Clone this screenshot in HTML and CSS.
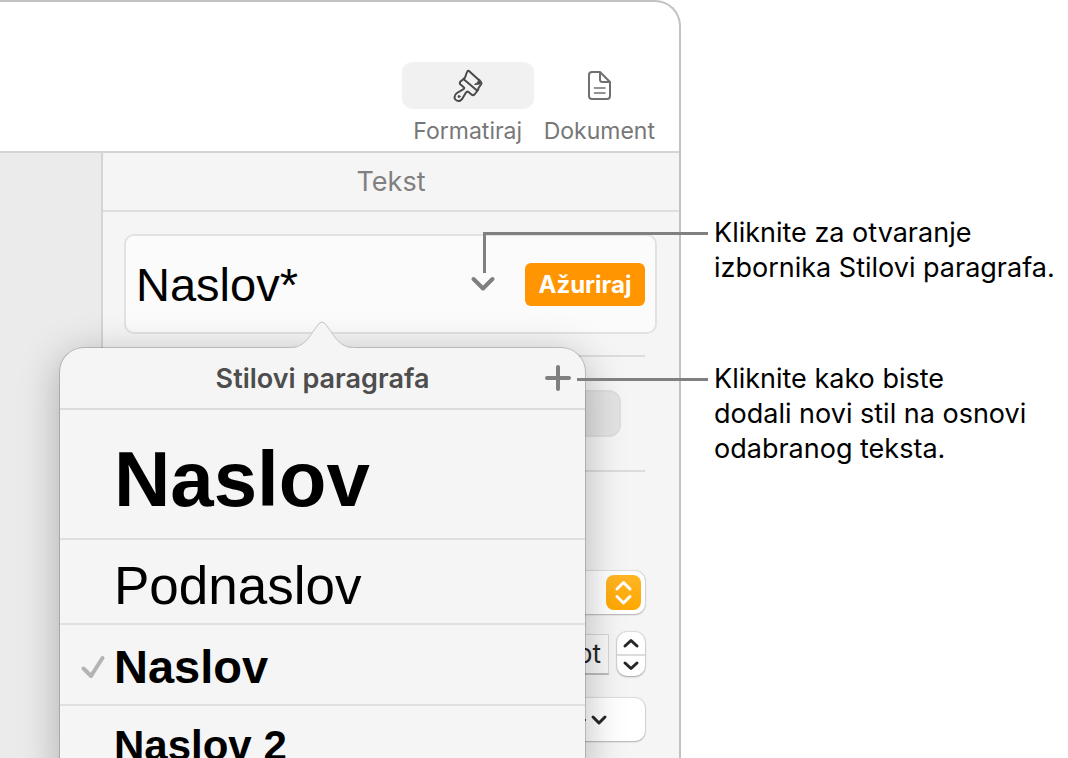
FILE: index.html
```html
<!DOCTYPE html>
<html lang="hr">
<head>
<meta charset="utf-8">
<title>Stilovi paragrafa</title>
<link rel="stylesheet" href="styles.css">
</head>
<body>
<div class="stage">
  <main class="window">
    <header class="toolbar">
      <button class="tool" type="button">
        <span class="tool-icon tool-icon-active">
          <svg width="34" height="34" viewBox="0 1 34 34" fill="none" stroke="#4a4a4a" stroke-width="2" stroke-linejoin="round" stroke-linecap="round">
            <path d="M18 3 Q16.500 2.500 16 4 L14 9.500 Q13.500 10.500 12.500 11 L9.500 13.500 Q8 15 9.500 16.500 L12.500 19 Q14 20 12.500 21.200 L6 25 Q2.500 27.500 4 31 Q6 34 9.500 32.500 Q11 31.500 12 29.500 L15 24.500 Q16 23 17.500 24 L20.500 26.500 Q22 28 23.500 26.500 L27 22 L27.500 20 L30 16.500 Q31 15 29.500 13.500 Z"/>
            <path d="M13 11.500 L26 22.500"/>
            <path d="M29 12 L29 16 L23.500 16.500 Q27 15.500 28 11.500 Z" fill="#4a4a4a" stroke-width="1"/>
            <circle cx="8" cy="28.500" r="1" fill="#4a4a4a" stroke-width="1"/>
          </svg>
        </span>
        <span class="tool-label">Formatiraj</span>
      </button>
      <button class="tool" type="button">
        <span class="tool-icon">
          <svg width="26" height="32" viewBox="0 1 26 32" fill="none" stroke="#707070" stroke-width="2" stroke-linejoin="round" stroke-linecap="round">
            <path d="M6 3 H14 L24 13 V27 Q24 30 21 30 H6 Q3 30 3 27 V6 Q3 3 6 3 Z"/>
            <path d="M14 3.500 V10.500 Q14 13 16.500 13 H23.500"/>
            <path d="M8.500 19 H19 M8.500 24 H19" stroke-width="1.600"/>
          </svg>
        </span>
        <span class="tool-label">Dokument</span>
      </button>
    </header>
    <div class="workspace">
      <div class="canvas"></div>
      <aside class="sidebar">
        <h2 class="sidebar-title">Tekst</h2>
        <div class="panel">
          <div class="style-card">
            <span class="style-name">Naslov*</span>
            <button class="style-open" type="button" aria-label="Stilovi paragrafa">
              <svg width="26" height="18" viewBox="0 0 26 18" fill="none" stroke="#7f7f7f" stroke-width="4" stroke-linecap="round" stroke-linejoin="round"><path d="M3.500 4 L13 13.500 L22.500 4"/></svg>
            </button>
            <button class="update" type="button">Ažuriraj</button>
          </div>
          <div class="controls">
            <hr class="rule">
            <div class="segment"></div>
            <hr class="rule">
            <div class="select-wrap">
              <select class="select" aria-label="Font"><option></option></select>
              <svg class="select-badge" width="35" height="35" viewBox="0 0 35 35">
                <defs><linearGradient id="amber" x1="0" y1="0" x2="0" y2="1"><stop offset="0" stop-color="#ffb524"/><stop offset="1" stop-color="#ffa800"/></linearGradient></defs>
                <rect width="35" height="35" rx="8" fill="url(#amber)"/>
                <path d="M11 14 L17.500 7.500 L24 14 M11 21.500 L17.500 28 L24 21.500" fill="none" stroke="#fff" stroke-width="3" stroke-linecap="round" stroke-linejoin="round"/>
              </svg>
            </div>
            <div class="size-row">
              <input class="size" type="text" value="pt" aria-label="Veličina">
              <div class="stepper">
                <button class="step" type="button" aria-label="Povećaj"><svg width="18" height="12" viewBox="0 0 18 12"><path d="M3 9 L9 3.500 L15 9"/></svg></button>
                <button class="step" type="button" aria-label="Smanji"><svg width="18" height="12" viewBox="0 0 18 12"><path d="M3 3 L9 8.500 L15 3"/></svg></button>
              </div>
            </div>
            <button class="options" type="button" aria-label="Opcije">
              <svg width="50" height="24" viewBox="0 0 50 24" fill="none" stroke="#262626" stroke-width="3" stroke-linecap="round" stroke-linejoin="round">
                <circle cx="12" cy="12" r="7" stroke-width="2"/>
                <path d="M20 12 H24 M12 1 V4 M12 20 V23" stroke-width="2"/>
                <path d="M32 9 L38 15 L44 9"/>
              </svg>
            </button>
          </div>
        </div>
        <section class="popover">
          <svg class="popover-arrow" width="66" height="30" viewBox="0 0 66 30">
            <path d="M0 30 V28 C15 28 18 20 28 6 Q33 -2 38 6 C48 20 51 28 66 28 V30 Z" fill="#f5f5f5"/>
            <path d="M0 27.500 C15 27.500 18 20 28 6 Q33 -2 38 6 C48 20 51 27.500 66 27.500" fill="none" stroke="#c4c4c4"/>
          </svg>
          <header class="popover-head">
            <h3 class="popover-title">Stilovi paragrafa</h3>
            <button class="add" type="button" aria-label="Dodaj stil">
              <svg width="26" height="26" viewBox="0 0 26 26" stroke="#7f7f7f" stroke-width="4" stroke-linecap="round"><path d="M13 2 V24 M2 13 H24"/></svg>
            </button>
          </header>
          <ul class="styles">
            <li><button class="style style-title" type="button"><span>Naslov</span></button></li>
            <li><button class="style style-subtitle" type="button"><span>Podnaslov</span></button></li>
            <li><button class="style style-heading" type="button">
              <svg class="check" width="26" height="26" viewBox="0 0 26 26" fill="none" stroke="#b4b4b4" stroke-width="4" stroke-linecap="round" stroke-linejoin="round"><path d="M3.500 14.500 L11 22 L22.500 4"/></svg>
              <span>Naslov</span></button></li>
            <li><button class="style style-heading2" type="button"><span>Naslov 2</span></button></li>
          </ul>
        </section>
      </aside>
    </div>
  </main>
  <div class="notes">
    <p class="note note-open">Kliknite za otvaranje<br>izbornika Stilovi paragrafa.</p>
    <p class="note note-add">Kliknite kako biste<br>dodali novi stil na osnovi<br>odabranog teksta.</p>
  </div>
</div>
</body>
</html>
```
FILE: styles.css
```css
* { box-sizing: border-box; }

body {
  margin: 0;
  background: #fff;
  font-family: Inter, "Liberation Sans", sans-serif;
  overflow: hidden;
}

button {
  margin: 0;
  padding: 0;
  border: 0;
  background: none;
  font: inherit;
  color: inherit;
}

svg { display: block; }

.stage {
  display: grid;
  grid-template-columns: minmax(0, 1fr) 387px;
  height: 100vh;
}

/* Application window */
.window {
  display: flex;
  flex-direction: column;
  min-height: 0;
  overflow: hidden;
  border: solid #c2c2c2;
  border-width: 2px 2px 0 0;
  border-top-right-radius: 26px;
}

.toolbar {
  display: flex;
  justify-content: flex-end;
  gap: 10px;
  padding: 60px 24px 5px 0;
  border-bottom: 2px solid #d4d4d4;
}

.tool {
  display: flex;
  flex-direction: column;
  align-items: center;
  gap: 8px;
  color: #777;
}

.tool-icon {
  display: flex;
  align-items: center;
  justify-content: center;
  height: 47px;
}

.tool-icon-active {
  width: 132px;
  border-radius: 10px;
  background: #f1f1f1;
}

.tool-label {
  font-size: 23px;
  line-height: 29px;
}

.workspace {
  display: flex;
  flex: 1;
  min-height: 0;
}

.canvas {
  flex: 1;
  background: #ebebeb;
}

.sidebar {
  position: relative;
  width: 578px;
  border-left: 2px solid #d4d4d4;
  background: #f5f5f5;
}

.sidebar-title {
  margin: 0;
  border-bottom: 2px solid #dedede;
  color: #808080;
  font-size: 27px;
  font-weight: 400;
  line-height: 57px;
  text-align: center;
}

.panel { padding: 22px 22px 0 21px; }

.style-card {
  display: flex;
  align-items: center;
  height: 100px;
  padding: 0 10px;
  border: 2px solid #e2e2e2;
  border-radius: 10px;
  background: #fbfbfb;
}

.style-name {
  flex: 1;
  font-family: "Liberation Sans", sans-serif;
  font-size: 47px;
}

.style-open { margin-right: 29px; }

.update {
  width: 120px;
  height: 43px;
  border-radius: 6px;
  background: #ff9500;
  color: #fff;
  font-size: 24px;
  font-weight: 700;
}

.controls {
  display: flex;
  flex-direction: column;
  padding: 0 12px;
}

.rule {
  width: 100%;
  height: 2px;
  margin: 21px 0 33px;
  border: 0;
  background: #dcdcdc;
}

.segment {
  height: 47px;
  margin: 0 24px 12px;
  border: 2px solid #dedede;
  border-radius: 12px;
  background: #e3e3e3;
}

.select-wrap {
  position: relative;
  margin-top: 66px;
}

.select {
  display: block;
  width: 100%;
  height: 43px;
  border: 0;
  border-radius: 10px;
  appearance: none;
  background: #fff;
  box-shadow: 0 0 1px 1px #0000001a, 0 1px 2px #00000033;
}

.select-badge {
  position: absolute;
  top: 4px;
  right: 4px;
  pointer-events: none;
}

.size-row {
  display: flex;
  align-items: center;
  justify-content: flex-end;
  gap: 8px;
  margin: 18px 0 22px;
}

.size {
  width: 120px;
  height: 41px;
  padding: 0 7px;
  border: 1px solid #d6d6d6;
  border-bottom: 2px solid #bdbdbd;
  background: #f8f8f8;
  color: #262626;
  font: 26px Inter, sans-serif;
  text-align: right;
}

.stepper {
  width: 28px;
  border-radius: 10px;
  background: #fff;
  box-shadow: 0 0 1px 1px #0000001a, 0 1px 2px #00000040;
}

.step {
  display: flex;
  align-items: center;
  justify-content: center;
  width: 28px;
  height: 22px;
}

.step + .step { border-top: 2px solid #dcdcdc; }

.step path {
  fill: none;
  stroke: #262626;
  stroke-width: 3;
  stroke-linecap: round;
  stroke-linejoin: round;
}

.options {
  display: flex;
  align-items: center;
  justify-content: flex-end;
  height: 43px;
  padding-right: 34px;
  border-radius: 10px;
  background: #fff;
  box-shadow: 0 0 1px 1px #0000001a, 0 1px 2px #00000033;
}

/* Paragraph style menu, floating over the sidebar */
.popover {
  position: absolute;
  top: 195px;
  left: -43px;
  width: 525px;
  height: 440px;
  border-radius: 24px;
  background: #f5f5f5;
  box-shadow: 0 0 0 1px #0000002b, 0 8px 40px #00000047;
}

.popover-arrow {
  position: absolute;
  top: -28px;
  left: 229px;
}

.popover-head {
  display: grid;
  grid-template-columns: 40px 1fr 40px;
  align-items: center;
  height: 62px;
  border-bottom: 2px solid #dcdcdc;
}

.popover-title {
  grid-column: 2;
  margin: 0;
  color: #4d4d4d;
  font-size: 27px;
  font-weight: 600;
  text-align: center;
}

.styles {
  margin: 0;
  padding: 0;
  list-style: none;
  font-family: "Liberation Sans", sans-serif;
}

.style {
  position: relative;
  display: flex;
  align-items: center;
  width: 100%;
  padding-left: 54px;
  border-bottom: 2px solid #e0e0e0;
  color: #000;
}

.style-title {
  height: 130px;
  padding-top: 10px;
  font-size: 78px;
  font-weight: 700;
}

.style-subtitle {
  height: 85px;
  padding-top: 8px;
  font-size: 53px;
}

.style-heading {
  height: 81px;
  padding-top: 4px;
  font-size: 47px;
  font-weight: 700;
}

.style-heading2 {
  height: 81px;
  font-size: 42px;
  font-weight: 700;
}

.check {
  position: absolute;
  left: 20px;
}

/* Callouts with leader lines */
.notes {
  display: flex;
  flex-direction: column;
  gap: 76px;
  padding: 215px 0 0 33px;
}

.note {
  position: relative;
  margin: 0;
  color: #000;
  font-size: 27px;
  line-height: 35px;
  white-space: nowrap;
}

.note::before {
  content: "";
  position: absolute;
  top: 17px;
  right: calc(100% + 6px);
  border-top: 3px solid #808080;
}

.note-open::before {
  width: 222px;
  height: 38px;
  border-left: 3px solid #808080;
}

.note-add::before { width: 131px; }
```
